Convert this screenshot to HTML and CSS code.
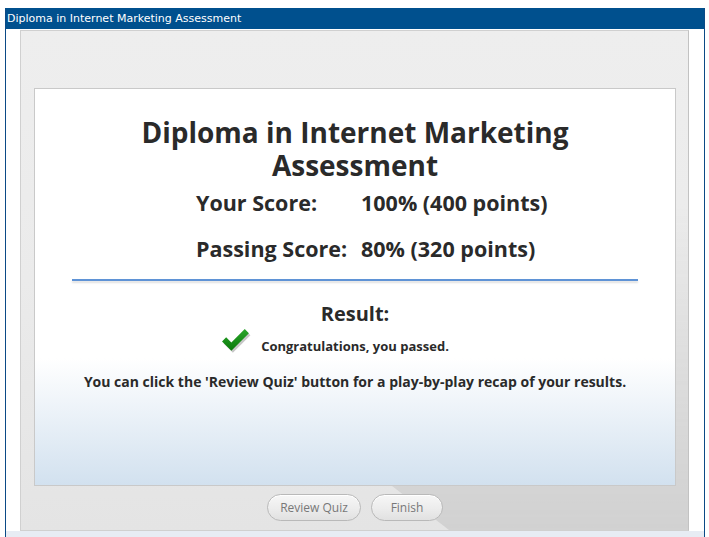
FILE: index.html
```html
<!DOCTYPE html>
<html>
<head>
<meta charset="utf-8">
<link rel="stylesheet" href="styles.css">
</head>
<body>
<div class="window">
  <div class="titlebar">Diploma in Internet Marketing Assessment</div>
  <div class="stage">
    <div class="panel">
      <div class="card">
        <h1 class="title">Diploma in Internet Marketing Assessment</h1>
        <div class="scores">
          <div class="label">Your Score:</div><div class="value">100% (400 points)</div>
          <div class="label row2">Passing Score:</div><div class="value row2">80% (320 points)</div>
        </div>
        <div class="sep"></div>
        <div class="result">Result:</div>
        <div class="passed">
          <svg class="check" width="31" height="28" viewBox="0 0 30 27">
            <defs>
              <linearGradient id="g" x1="0" y1="0" x2="0" y2="1">
                <stop offset="0" stop-color="#2aa52a"/>
                <stop offset="1" stop-color="#0a7a0a"/>
              </linearGradient>
            </defs>
            <path d="M2.5 15 L6.5 11 L11.5 16 L24.5 3 L28.5 7 L11.5 24 Z" fill="#000" opacity="0.22"/>
            <path d="M1 13 L5 9 L10 14 L23 1 L27 5 L10 22 Z" fill="url(#g)"/>
          </svg>
          <span>Congratulations, you passed.</span>
        </div>
        <p class="recap">You can click the 'Review Quiz' button for a play-by-play recap of your results.</p>
      </div>
      <div class="buttons">
        <button class="btn review">Review Quiz</button>
        <button class="btn finish">Finish</button>
      </div>
    </div>
  </div>
  <div class="strip"></div>
</div>
</body>
</html>
```
FILE: styles.css
```css
html, body {
  margin: 0;
  padding: 0;
  background: #ffffff;
}
body {
  padding-top: 8px;
}
.window {
  margin-left: 5px;
  width: 700px;
  height: 529px;
  box-sizing: border-box;
  border-left: 1px solid #0b4a86;
  border-right: 1px solid #0b4a86;
  background: #ffffff;
  overflow: hidden;
}
.titlebar {
  height: 21px;
  line-height: 21px;
  background: #00508e;
  color: #ffffff;
  font-family: "DejaVu Sans", Verdana, sans-serif;
  font-size: 11px;
  padding-left: 1px;
  white-space: nowrap;
}
.stage {
  padding: 1px 15px 0 14px;
}
.panel {
  position: relative;
  height: 501px;
  box-sizing: border-box;
  border: 1px solid #d0d0d0;
  border-right-color: #c2c2c2;
  background: linear-gradient(to bottom, #eeeeee 0%, #ebebeb 50%, #e4e4e4 100%);
  padding: 57px 12px 0 13px;
}
.panel::before {
  content: "";
  position: absolute;
  left: 0; top: 0; right: 0; bottom: 0;
  background: #cfcfcf;
  clip-path: polygon(0 168px, 428px 499px, 100% 100%, 100% 0, 0 0);
  -webkit-mask-image: linear-gradient(to bottom, rgba(0,0,0,0) 0%, rgba(0,0,0,0) 35%, rgba(0,0,0,0.9) 100%);
  mask-image: linear-gradient(to bottom, rgba(0,0,0,0) 0%, rgba(0,0,0,0) 35%, rgba(0,0,0,0.9) 100%);
}
.card {
  position: relative;
  height: 398px;
  box-sizing: border-box;
  border: 1px solid #c9c9c9;
  background: linear-gradient(to bottom, #ffffff 0%, #ffffff 68%, #d2e1ef 100%);
  padding-top: 27px;
  font-family: "Open Sans", "Noto Sans", sans-serif;
  color: #2a2a2a;
  text-align: center;
}
.title {
  margin: 0 auto;
  width: 500px;
  font-size: 28px;
  line-height: 33px;
  font-weight: 700;
}
.scores {
  display: grid;
  grid-template-columns: 165px auto;
  margin: 7px 0 0 161px;
  text-align: left;
  font-size: 21.5px;
  line-height: 28px;
  font-weight: 700;
}
.scores .row2 {
  margin-top: 18px;
}
.sep {
  margin: 16px 37px 0 37px;
  height: 2px;
  background: #5f93d6;
  box-shadow: 0 2px 2px rgba(0,0,0,0.13);
}
.result {
  margin-top: 19px;
  font-size: 20px;
  line-height: 28px;
  font-weight: 700;
}
.passed {
  display: flex;
  justify-content: center;
  align-items: center;
  gap: 9px;
  padding-right: 40px;
  margin-top: 8px;
  font-size: 13px;
  line-height: 20px;
  font-weight: 700;
}
.check {
  display: block;
  margin-top: -8px;
}
.recap {
  margin: 16px 0 0 0;
  font-size: 14px;
  line-height: 20px;
  font-weight: 700;
}
.buttons {
  position: relative;
  display: flex;
  justify-content: center;
  gap: 10px;
  margin-top: 8px;
}
.btn {
  height: 27px;
  box-sizing: border-box;
  border: 1px solid #b9b9b9;
  border-radius: 14px;
  background: linear-gradient(to bottom, #f7f7f7 0%, #ececec 55%, #e1e1e1 100%);
  color: #787878;
  font-family: "Open Sans", "Noto Sans", sans-serif;
  font-size: 12px;
  padding: 0;
  box-shadow: inset 0 1px 0 #ffffff;
}
.review { width: 94px; }
.finish { width: 72px; }
.strip {
  height: 10px;
  background: #e7ecf4;
}
```
